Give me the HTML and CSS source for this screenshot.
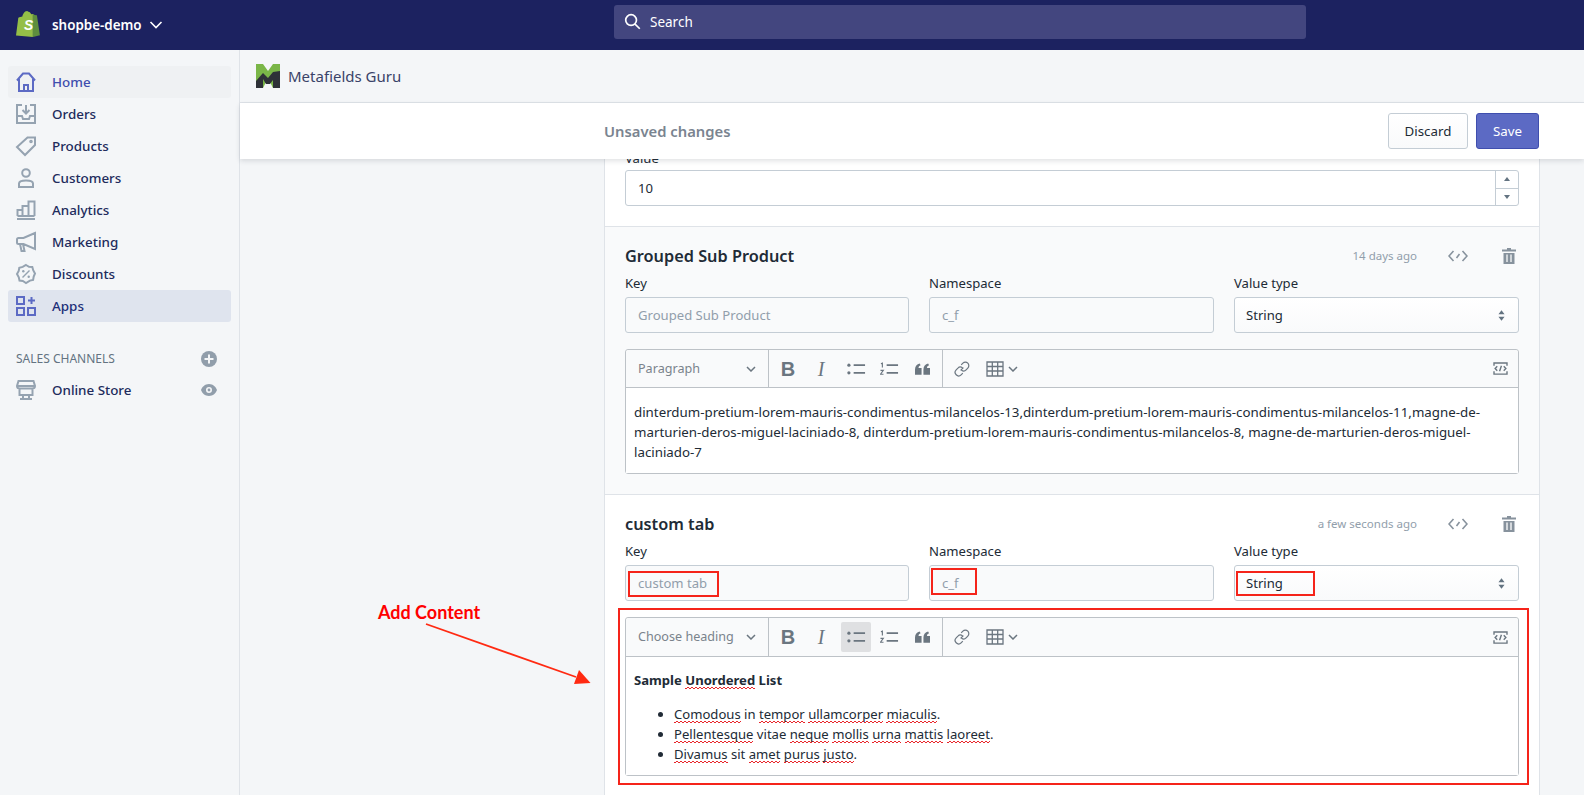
FILE: index.html
```html
<!DOCTYPE html>
<html lang="en">
<head>
<meta charset="utf-8">
<title>Metafields Guru</title>
<link rel="stylesheet" href="styles.css">
</head>
<body>
<div class="page">
  <header class="topbar">
    <div class="shop">
      <svg class="shop-logo" viewBox="0 0 26 28">
        <path fill="#95bf47" d="M17.600 3.200 16.400 3.500C15.800 1.600 14.800.7 13.600.7h-.3C12.900.2 12.400 0 12 0 8.900 0 7.400 3.900 6.900 5.800L3.600 6.800C2.600 7.100 2.500 7.200 2.400 8.100L0 26.500 18.300 28V3.200Z"/>
        <path fill="#5e8e3e" d="M18.300 3.100V28L26 26.100C26 26.100 22.800 4.900 22.700 4.700 22.700 4.500 22.500 4.400 22.400 4.400L20.200 4.200 18.800 3.100Z"/>
        <text class="shop-s" x="8.600" y="20.500">S</text>
      </svg>
      <span class="shop-name">shopbe-demo</span>
      <svg class="shop-caret" viewBox="0 0 14 10"><path d="M1.500 2 7 7.500 12.500 2"/></svg>
    </div>
    <div class="search">
      <svg class="search-icon" viewBox="0 0 18 18"><circle cx="7.500" cy="7.500" r="5.700"/><path d="m11.700 11.700 5 5"/></svg>
      <span>Search</span>
    </div>
  </header>

  <div class="body">
    <nav class="sidebar">
      <a class="nav-item nav-home">
        <svg class="ico ico-blue" viewBox="0 0 20 20"><path d="M1 8.500 7 1.500h6l6 7M3 7v12h14V7"/><path d="M8 19v-6h4v6"/></svg>
        <span>Home</span>
      </a>
      <a class="nav-item">
        <svg class="ico" viewBox="0 0 20 20"><path d="M6 1H1v18h18V1h-5M1 12h5l1 3h6l1-3h5"/><path d="M10 1v8M6.500 6l3.500 3.500L13.500 6"/></svg>
        <span>Orders</span>
      </a>
      <a class="nav-item">
        <svg class="ico" viewBox="0 0 20 20"><path d="M11.500 1.500H19v7.500L9 19 1 11Z"/><circle cx="15" cy="5.500" r=".8"/></svg>
        <span>Products</span>
      </a>
      <a class="nav-item">
        <svg class="ico" viewBox="0 0 20 20"><circle cx="10" cy="5" r="3.800"/><path d="M3 15.500c0-2 3-3 7-3s7 1 7 3v3.500H3Z"/></svg>
        <span>Customers</span>
      </a>
      <a class="nav-item">
        <svg class="ico" viewBox="0 0 20 20"><path d="M1 19h18M1.500 16V10h5v6M6.500 16V6h6v10M12.500 16V1.500h6V16M1.500 16h17"/></svg>
        <span>Analytics</span>
      </a>
      <a class="nav-item">
        <svg class="ico" viewBox="0 0 20 20"><path d="M19 1 7.500 6H2.500C1.500 6 1 6.500 1 7.500v3c0 1 .5 1.500 1.500 1.500h5L19 17ZM4 12l1.500 7h3l-1.500-7"/></svg>
        <span>Marketing</span>
      </a>
      <a class="nav-item">
        <svg class="ico" viewBox="0 0 20 20"><path d="M10 1l3 1.800 3.300.2.900 3.200L19 9.500l-1.300 3-.6 3.400-3.200.7L10 19l-3.200-2-3.300-.4-.7-3.300L1 10l1.700-3 .6-3.300 3.400-.8Z"/><path class="thin" d="m6.500 13.500 7-7"/><circle class="dot" cx="7.300" cy="7.300" r="1.200"/><circle class="dot" cx="12.700" cy="12.700" r="1.200"/></svg>
        <span>Discounts</span>
      </a>
      <a class="nav-item nav-apps">
        <svg class="ico ico-blue" viewBox="0 0 20 20"><path d="M1 1h7v7H1ZM1 12h7v7H1ZM12 12h7v7h-7ZM15.500 1v7M12 4.500h7"/></svg>
        <span>Apps</span>
      </a>
      <div class="nav-head">
        <span>SALES CHANNELS</span>
        <svg class="side-action" viewBox="0 0 16 16"><circle class="dot" cx="8" cy="8" r="8"/><path class="plus" d="M8 3.500v9M3.500 8h9"/></svg>
      </div>
      <a class="nav-item">
        <svg class="ico" viewBox="0 0 20 20"><path d="M2.500 1h15l1.500 5c0 2-2 2.500-3 2.500H4C3 8.500 1 8 1 6ZM3.500 8.500V15h13V8.500M1 6h18M7 15v4M13 15v4M4 19h12"/></svg>
        <span>Online Store</span>
        <svg class="side-action side-eye" viewBox="0 0 16 12"><path class="dot" fill-rule="evenodd" d="M8 0c4 0 7 3 8 6-1 3-4 6-8 6S1 9 0 6c1-3 4-6 8-6Zm0 3a3 3 0 1 0 0 6 3 3 0 0 0 0-6Z"/><circle class="dot" cx="8" cy="6" r="1.400"/></svg>
      </a>
    </nav>

    <main class="main">
      <div class="app-head">
        <svg class="app-logo" viewBox="0 0 24 24">
          <path fill="#7ab648" d="M0 0h7l5 7 5-7h7v13L17 24 12 14 7 24H0Z"/>
          <path fill="#2e3138" d="M0 24V17L7 9l5 5 5-6 7-1v17h-7v-8l-3 4h-4l-3-5v9Z"/>
        </svg>
        <span>Metafields Guru</span>
      </div>
      <div class="context-bar">
        <span class="context-title">Unsaved changes</span>
        <div class="context-actions">
          <button class="btn btn-plain">Discard</button>
          <button class="btn btn-primary">Save</button>
        </div>
      </div>
      <div class="scroll">
        <div class="card">
          <section class="sec sec-first">
            <label class="lbl">Value</label>
            <div class="number">
              <span class="number-val">10</span>
              <div class="spin">
                <span class="spin-btn"><i class="tri-up"></i></span>
                <span class="spin-btn"><i class="tri-down"></i></span>
              </div>
            </div>
          </section>

          <section class="sec sec-tint">
            <div class="sec-head">
              <h2>Grouped Sub Product</h2>
              <span class="meta">14 days ago</span>
              <svg class="act act-code" viewBox="0 0 20 14"><path d="M5.500 2 1 7l4.500 5M14.500 2 19 7l-4.500 5M8.500 9l3-4"/></svg>
              <svg class="act act-trash" viewBox="0 0 14 16"><path class="solid" d="M5 0h4v1.500h5v2H0v-2h5ZM1.500 5h11v11h-11Z"/><path class="cut" d="M5 6.500V14M9 6.500V14"/></svg>
            </div>
            <div class="fields">
              <div class="field"><label class="lbl">Key</label><div class="input input-off">Grouped Sub Product</div></div>
              <div class="field"><label class="lbl">Namespace</label><div class="input input-off">c_f</div></div>
              <div class="field"><label class="lbl">Value type</label><div class="input input-select">String<svg class="updown" viewBox="0 0 8 12"><path d="M4 0 7.500 4.500H.5ZM4 12 .5 7.500h7Z"/></svg></div></div>
            </div>
            <div class="editor">
              <div class="toolbar">
                <div class="tb-select"><span>Paragraph</span><svg class="tb-caret" viewBox="0 0 10 6"><path d="M1 1l4 4 4-4"/></svg></div>
                <div class="tb-group">
                  <span class="tb-btn tb-b">B</span>
                  <span class="tb-btn tb-i">I</span>
                  <span class="tb-btn"><svg class="tb-ico" viewBox="0 0 20 14"><circle cx="2" cy="3" r="1.700"/><circle cx="2" cy="11" r="1.700"/><path class="ln" d="M7 3h12M7 11h12"/></svg></span>
                  <span class="tb-btn"><svg class="tb-ico" viewBox="0 0 20 14"><path class="ln thin" d="M1 1.500 2.500.8v4.700M.5 8.500h3l-3 4h3.200"/><path class="ln" d="M7 3h12M7 11h12"/></svg></span>
                  <span class="tb-btn"><svg class="tb-ico tb-quote" viewBox="0 0 16 12"><path d="M0 12V6.500C0 3 2 .8 5 0l1 2C4.500 2.600 3.800 3.500 3.800 5H7v7ZM9 12V6.500C9 3 11 .8 14 0l1 2c-1.500.6-2.200 1.500-2.200 3H16v7Z"/></svg></span>
                </div>
                <div class="tb-group tb-last">
                  <span class="tb-btn"><svg class="tb-ico tb-link" viewBox="0 0 16 16"><path class="ln thin" d="M6.600 9.400 9.400 6.600M7.200 3.900l1.700-1.700a3.400 3.400 0 0 1 4.900 4.900l-1.700 1.700a3.400 3.400 0 0 1-4.500.4M8.800 12.100l-1.700 1.700a3.400 3.400 0 0 1-4.900-4.900l1.700-1.700a3.400 3.400 0 0 1 4.500-.4"/></svg></span>
                  <span class="tb-table"><svg class="tb-grid" viewBox="0 0 18 16"><path class="ln thin" d="M1 1h16v14H1ZM1 5.500h16M1 10h16M6.300 1v14M11.700 1v14"/></svg><svg class="tb-caret" viewBox="0 0 10 6"><path d="M1 1l4 4 4-4"/></svg></span>
                </div>
                <svg class="tb-source" viewBox="0 0 16 14"><path d="M1 4V1h14v3M1 10v3h14v-3M4.500 4.500 2.200 7l2.300 2.500M11.500 4.500 13.800 7l-2.300 2.500M9 4l-2 6"/></svg>
              </div>
              <div class="editor-body body-long">dinterdum-pretium-lorem-mauris-condimentus-milancelos-13,dinterdum-pretium-lorem-mauris-condimentus-milancelos-11,magne-de-marturien-deros-miguel-laciniado-8, dinterdum-pretium-lorem-mauris-condimentus-milancelos-8, magne-de-marturien-deros-miguel-laciniado-7</div>
            </div>
          </section>

          <section class="sec sec-white">
            <div class="sec-head">
              <h2>custom tab</h2>
              <span class="meta">a few seconds ago</span>
              <svg class="act act-code" viewBox="0 0 20 14"><path d="M5.500 2 1 7l4.500 5M14.500 2 19 7l-4.500 5M8.500 9l3-4"/></svg>
              <svg class="act act-trash" viewBox="0 0 14 16"><path class="solid" d="M5 0h4v1.500h5v2H0v-2h5ZM1.500 5h11v11h-11Z"/><path class="cut" d="M5 6.500V14M9 6.500V14"/></svg>
            </div>
            <div class="fields">
              <div class="field"><label class="lbl">Key</label><div class="input input-off">custom tab</div></div>
              <div class="field"><label class="lbl">Namespace</label><div class="input input-off">c_f</div></div>
              <div class="field"><label class="lbl">Value type</label><div class="input input-select">String<svg class="updown" viewBox="0 0 8 12"><path d="M4 0 7.500 4.500H.5ZM4 12 .5 7.500h7Z"/></svg></div></div>
            </div>
            <div class="editor">
              <div class="toolbar toolbar-tall">
                <div class="tb-select"><span>Choose heading</span><svg class="tb-caret" viewBox="0 0 10 6"><path d="M1 1l4 4 4-4"/></svg></div>
                <div class="tb-group">
                  <span class="tb-btn tb-b">B</span>
                  <span class="tb-btn tb-i">I</span>
                  <span class="tb-btn tb-on"><svg class="tb-ico" viewBox="0 0 20 14"><circle cx="2" cy="3" r="1.700"/><circle cx="2" cy="11" r="1.700"/><path class="ln" d="M7 3h12M7 11h12"/></svg></span>
                  <span class="tb-btn"><svg class="tb-ico" viewBox="0 0 20 14"><path class="ln thin" d="M1 1.500 2.500.8v4.700M.5 8.500h3l-3 4h3.200"/><path class="ln" d="M7 3h12M7 11h12"/></svg></span>
                  <span class="tb-btn"><svg class="tb-ico tb-quote" viewBox="0 0 16 12"><path d="M0 12V6.500C0 3 2 .8 5 0l1 2C4.500 2.600 3.800 3.500 3.800 5H7v7ZM9 12V6.500C9 3 11 .8 14 0l1 2c-1.500.6-2.200 1.500-2.200 3H16v7Z"/></svg></span>
                </div>
                <div class="tb-group tb-last">
                  <span class="tb-btn"><svg class="tb-ico tb-link" viewBox="0 0 16 16"><path class="ln thin" d="M6.600 9.400 9.400 6.600M7.200 3.900l1.700-1.700a3.400 3.400 0 0 1 4.900 4.900l-1.700 1.700a3.400 3.400 0 0 1-4.500.4M8.800 12.100l-1.700 1.700a3.400 3.400 0 0 1-4.900-4.900l1.700-1.700a3.400 3.400 0 0 1 4.500-.4"/></svg></span>
                  <span class="tb-table"><svg class="tb-grid" viewBox="0 0 18 16"><path class="ln thin" d="M1 1h16v14H1ZM1 5.500h16M1 10h16M6.300 1v14M11.700 1v14"/></svg><svg class="tb-caret" viewBox="0 0 10 6"><path d="M1 1l4 4 4-4"/></svg></span>
                </div>
                <svg class="tb-source" viewBox="0 0 16 14"><path d="M1 4V1h14v3M1 10v3h14v-3M4.500 4.500 2.200 7l2.300 2.500M11.500 4.500 13.800 7l-2.300 2.500M9 4l-2 6"/></svg>
              </div>
              <div class="editor-body body-rich">
                <p class="strong">Sample <span class="sp">Unordered</span> List</p>
                <ul class="list">
                  <li><span class="sp">Comodous</span> in <span class="sp">tempor</span> <span class="sp">ullamcorper</span> <span class="sp">miaculis</span>.</li>
                  <li><span class="sp">Pellentesque</span> vitae <span class="sp">neque</span> <span class="sp">mollis</span> <span class="sp">urna</span> <span class="sp">mattis</span> <span class="sp">laoreet</span>.</li>
                  <li><span class="sp">Divamus</span> sit <span class="sp">amet</span> <span class="sp">purus</span> <span class="sp">justo</span>.</li>
                </ul>
              </div>
            </div>
          </section>
        </div>
      </div>
    </main>
  </div>

  <div class="note note-label">Add Content</div>
  <svg class="note note-arrow" viewBox="0 0 180 70"><path class="arrow-line" d="M5 4 155 57"/><path class="arrow-head" d="M169.500 63 153 64 158 50Z"/></svg>
  <div class="note mark mark-key"></div>
  <div class="note mark mark-ns"></div>
  <div class="note mark mark-type"></div>
  <div class="note mark mark-editor"></div>
</div>
</body>
</html>
```

FILE: styles.css
```css
* { box-sizing: border-box; }
html, body { margin: 0; height: 100%; overflow: hidden; }
body {
  font-family: "Noto Sans", "Open Sans", sans-serif;
  font-size: 13.100px;
  line-height: 20px;
  color: #212b36;
  background: #f4f6f8;
}
.page { position: relative; width: 1584px; height: 795px; overflow: hidden; }

/* top bar */
.topbar { display: flex; align-items: center; height: 50px; background: #1c2260; position: relative; }
.shop { display: flex; align-items: center; width: 614px; padding-left: 16px; color: #fff; }
.shop-logo { width: 24px; height: 28px; margin-bottom: 2px; }
.shop-s { font: italic 700 15px "Liberation Sans", sans-serif; fill: #fff; }
.shop-name { margin-left: 12px; font-weight: 600; font-size: 13.400px; }
.shop-caret { width: 14px; height: 10px; margin-left: 7px; fill: none; stroke: #fff; stroke-width: 1.600; }
.search {
  display: flex; align-items: center; width: 692px; height: 34px; margin-top: -7px;
  padding-left: 10px; background: #43467f; border-radius: 3px; color: #fff; font-size: 13.500px;
}
.search-icon { width: 17px; height: 17px; margin-right: 9px; fill: none; stroke: #fff; stroke-width: 1.800; }

/* layout */
.body { display: flex; height: 745px; }
.sidebar { width: 240px; flex: none; padding: 16px 8px 0; border-right: 1px solid #dfe3e8; background: #f4f6f8; }
.nav-item { display: flex; align-items: center; width: 223px; height: 32px; padding: 0 8px; border-radius: 3px; font-weight: 500; color: #212b5c; font-size: 13.400px; }
.nav-item > span { margin-left: 16px; }
.nav-home { background: #eff1f3; color: #3f4eae; }
.nav-apps { background: #dfe4ee; color: #202e78; }
.ico { width: 20px; height: 20px; flex: none; fill: none; stroke: #95a3b1; stroke-width: 2; overflow: visible; }
.ico-blue { stroke: #5c6ac4; }
.ico .thin { stroke-width: 1.500; }
.ico .dot { fill: #95a3b1; stroke: none; }
.nav-head {
  display: flex; align-items: center; justify-content: space-between; height: 20px;
  margin-top: 27px; margin-bottom: 5px; padding: 0 14px 0 8px; font-size: 12px; color: #637381;
  width: 223px;
}
.side-action { width: 16px; height: 16px; flex: none; }
.side-action .dot { fill: #919eab; }
.side-action .plus { stroke: #f4f6f8; stroke-width: 2; fill: none; }
.side-eye { height: 12px; margin-left: auto; margin-right: 6px; }

/* main */
.main { flex: 1; display: flex; flex-direction: column; min-width: 0; }
.app-head { display: flex; align-items: center; height: 53px; padding-left: 16px; border-bottom: 1px solid #dfe3e8; color: #3a4368; font-size: 15px; }
.app-logo { width: 24px; height: 24px; margin-right: 8px; }
.context-bar {
  position: relative; z-index: 2; display: flex; align-items: center; justify-content: space-between;
  height: 56px; padding: 0 45px 0 364px; background: #fff; box-shadow: 0 2px 5px rgba(33, 43, 54, .14);
  flex: none;
}
.context-title { font-size: 14.800px; font-weight: 600; color: #7a8490; }
.context-actions { display: flex; gap: 8px; }
.btn { height: 36px; border-radius: 3px; font: inherit; font-size: 13.300px; padding: 0; }
.btn-plain { width: 80px; background: linear-gradient(#fff, #f9fafb); border: 1px solid #c4cdd5; color: #212b36; }
.btn-primary { width: 63px; background: #5c6ac4; border: 1px solid #3f4eae; color: #fff; }
.scroll { flex: 1; overflow: hidden; padding-left: 364px; }
.card { width: 936px; margin-top: -11px; background: #fff; border-left: 1px solid #dfe3e8; border-right: 1px solid #dfe3e8; }
.sec { padding: 19px 20px 20px; }
.sec-first { padding: 0 20px 20px; }
.sec-first .lbl { margin-bottom: 2px; }
.sec-tint { background: #f9fafb; border-top: 1px solid #dfe3e8; border-bottom: 1px solid #dfe3e8; }
.sec-white { background: #fff; }
.lbl { display: block; height: 20px; margin-bottom: 4px; }
.number { display: flex; align-items: center; height: 36px; border: 1px solid #c4cdd5; border-radius: 3px; background: #fff; }
.number-val { flex: 1; padding-left: 12px; }
.spin { width: 23px; height: 100%; border-left: 1px solid #c4cdd5; display: flex; flex-direction: column; }
.spin-btn { flex: 1; display: flex; align-items: center; justify-content: center; }
.spin-btn + .spin-btn { border-top: 1px solid #c4cdd5; }
.tri-up { border: 3.500px solid transparent; border-top: 0; border-bottom: 4px solid #637381; }
.tri-down { border: 3.500px solid transparent; border-bottom: 0; border-top: 4px solid #637381; }
.sec-head { display: flex; align-items: center; height: 20px; margin-bottom: 7px; }
h2 { margin: 0 auto 0 0; font-size: 16.300px; font-weight: 600; line-height: 20px; color: #212b36; }
.meta { font-size: 11.500px; color: #919eab; margin-right: 31px; }
.act { flex: none; }
.act-code { width: 20px; height: 14px; margin-right: 34px; fill: none; stroke: #87929d; stroke-width: 1.600; }
.act-trash { width: 14px; height: 16px; margin-right: 3px; }
.act-trash .solid { fill: #87929d; }
.act-trash .cut { stroke: #fff; stroke-width: 1.300; fill: none; }
.sec-tint .act-trash .cut { stroke: #f9fafb; }
.fields { display: grid; grid-template-columns: 284px 285px 285px; column-gap: 20px; margin-bottom: 16px; }
.input { display: flex; align-items: center; height: 36px; padding: 0 12px; border: 1px solid #c4cdd5; border-radius: 3px; }
.input-off { background: #f9fafb; color: #919eab; }
.input-select { justify-content: space-between; padding-left: 11px; background: linear-gradient(#fff, #f9fafb); color: #212b36; }
.updown { width: 7px; height: 11px; fill: #637381; margin-right: 1px; }

/* editor */
.editor { border: 1px solid #bdc2c7; border-radius: 3px; background: #fff; }
.toolbar { display: flex; align-items: stretch; height: 38px; background: #f9fafb; border-bottom: 1px solid #bdc2c7; border-radius: 3px 3px 0 0; }
.toolbar-tall { height: 39px; }
.tb-select { display: flex; align-items: center; justify-content: space-between; width: 143px; padding: 0 12px; color: #7a838c; border-right: 1px solid #bdc2c7; font-size: 12.600px; }
.tb-caret { width: 10px; height: 6px; fill: none; stroke: #6b7680; stroke-width: 1.500; flex: none; }
.tb-group { display: flex; align-items: center; width: 174px; padding-left: 4px; border-right: 1px solid #bdc2c7; }
.tb-last { border-right: 0; width: 120px; padding-left: 4px; }
.tb-btn { display: flex; align-items: center; justify-content: center; width: 30px; height: 30px; margin-right: 3px; color: #6b7680; }
.tb-i { margin-right: 5px; }
.tb-on { background: #dfe0e2; border-radius: 2px; }
.tb-b { font: 700 20px/1 "Liberation Sans", sans-serif; }
.tb-i { font: italic 400 20px/1 "Liberation Serif", serif; }
.tb-ico { width: 19px; height: 14px; fill: #6b7680; stroke: none; }
.tb-ico .ln { fill: none; stroke: #6b7680; stroke-width: 1.800; }
.tb-ico .thin { stroke-width: 1.200; }
.tb-quote { width: 15px; height: 12px; }
.tb-link { width: 16px; height: 16px; }
.tb-table { display: flex; align-items: center; gap: 4px; margin-left: 6px; }
.tb-grid { width: 18px; height: 16px; }
.tb-grid .ln { fill: none; stroke: #6b7680; stroke-width: 1.300; }
.tb-source { width: 15px; height: 13px; margin: auto 10px auto auto; fill: none; stroke: #6b7680; stroke-width: 1.500; }
.editor-body { padding: 14px 8px 11px; background: #fff; }
.body-long { font-size: 13.300px; }
.body-rich { padding-top: 13px; }
.editor-body p { margin: 0 0 14px; }
.strong { font-weight: 700; }
.list { margin: 0; padding-left: 40px; }
.sp {
  background-image:
    repeating-linear-gradient(90deg, #e8262b 0 2px, transparent 2px 4px),
    repeating-linear-gradient(90deg, transparent 0 2px, #e8262b 2px 4px);
  background-size: 100% 1px;
  background-repeat: no-repeat;
  background-position: 0 100%, 0 calc(100% - 1px);
}

/* annotations laid over the screenshot */
.note { position: absolute; }
.note-label { left: 378px; top: 602px; font: 700 18px/20px "Lato", sans-serif; color: #f00; }
.note-arrow { left: 421px; top: 620px; width: 180px; height: 70px; }
.arrow-line { stroke: #ff2a12; stroke-width: 1.800; fill: none; }
.arrow-head { fill: #ff2a12; }
.mark { border: 2px solid #f5241a; }
.mark-key { left: 628px; top: 571px; width: 91px; height: 26px; }
.mark-ns { left: 931px; top: 568px; width: 46px; height: 27px; }
.mark-type { left: 1236px; top: 571px; width: 79px; height: 25px; }
.mark-editor { left: 618px; top: 608px; width: 911px; height: 177px; }
```
